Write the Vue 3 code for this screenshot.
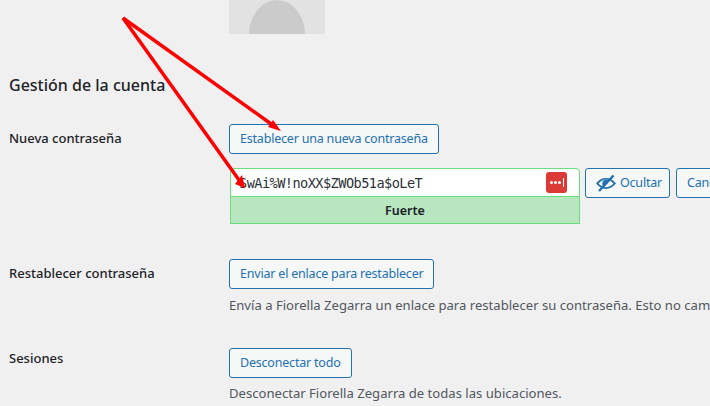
<script setup>
const password = 'SwAi%W!noXX$ZWOb51a$oLeT'
const holder = 'Fiorella Zegarra'
</script>

<template>
  <main class="page">
    <div class="avatar-row">
      <div class="avatar"><div class="avatar-head"></div></div>
    </div>

    <h2 class="title">Gestión de la cuenta</h2>

    <section class="row first">
      <div class="label">Nueva contraseña</div>
      <div class="field">
        <button class="btn">Establecer una nueva contraseña</button>
        <div class="pass-line">
          <div class="pass-box">
            <div class="pass-input">
              <span class="pass-text">{{ password }}</span>
              <span class="manager">
                <i></i><i></i><i></i><b></b>
              </span>
            </div>
            <div class="strength">Fuerte</div>
          </div>
          <button class="btn hide">
            <svg class="eye" width="20" height="20" viewBox="0 0 20 20">
              <path d="M0 10.500C3 6.800 6.300 5 10 5s7 1.800 10 5.500c-3 3.600-6.300 5.400-10 5.400s-7-1.800-10-5.400zm10-3.900c-2.500 0-5 1.300-7.500 3.900 2.500 2.500 5 3.800 7.500 3.800s5-1.300 7.500-3.800C15 7.900 12.500 6.600 10 6.600z" fill="#2271b1"/>
              <path d="M6.300 10.300A3.800 3.800 0 0 1 13.300 8.300L7.800 14.100a3.800 3.800 0 0 1-1.500-3.800z" fill="#2271b1"/>
              <path d="M3 18 17.500 2.500" stroke="#2271b1" stroke-width="2.400" fill="none"/>
            </svg>
            Ocultar
          </button>
          <button class="btn cancel">Cancelar</button>
        </div>
      </div>
    </section>

    <section class="row reset">
      <div class="label">Restablecer contraseña</div>
      <div class="field">
        <button class="btn">Enviar el enlace para restablecer</button>
        <p class="desc reset-desc">Envía a {{ holder }} un enlace para restablecer su contraseña. Esto no cambiará su contraseña ni la forzará a cambiarla.</p>
      </div>
    </section>

    <section class="row sessions">
      <div class="label sessions-label">Sesiones</div>
      <div class="field">
        <button class="btn">Desconectar todo</button>
        <p class="desc sessions-desc">Desconectar {{ holder }} de todas las ubicaciones.</p>
      </div>
    </section>

    <svg class="arrows" width="710" height="406" viewBox="0 0 710 406">
      <g stroke="#fe0000" stroke-width="3.500" fill="none">
        <path d="M123 18 274 126"/>
        <path d="M123 18 239 180"/>
      </g>
      <g fill="#fe0000">
        <path d="M281 131 268 127 273 120Z"/>
        <path d="M245 188 235 184 242 175Z"/>
      </g>
    </svg>
  </main>
</template>

<style>
html, body { margin: 0; background: #f0f0f1; }
</style>

<style scoped>
.page {
  position: relative;
  width: 710px;
  height: 406px;
  overflow: hidden;
  background: #f0f0f1;
  color: #1d2327;
  font-family: "Noto Sans", sans-serif;
  font-size: 13px;
}
.avatar-row { padding-left: 229px; }
.avatar {
  width: 96px;
  height: 34px;
  background: #e2e2e2;
  overflow: hidden;
  display: flex;
  justify-content: center;
}
.avatar-head {
  width: 56px;
  height: 70px;
  border-radius: 50%;
  background: #cbcbcb;
}
.title {
  margin: 40px 0 0 9px;
  font-size: 16px;
  line-height: 22px;
  font-weight: 500;
}
.row { display: flex; padding-left: 9px; }
.first { margin-top: 28px; }
.reset { margin-top: 35px; }
.sessions { margin-top: 34px; }
.label {
  width: 220px;
  flex: none;
  font-weight: 500;
  font-size: 13px;
  line-height: 18px;
  padding-top: 5px;
}
.sessions-label { padding-top: 1px; }
.field { flex: none; }
.btn {
  box-sizing: border-box;
  height: 30px;
  padding: 0 10px;
  border: 1px solid #2271b1;
  border-radius: 3px;
  background: #f6f7f7;
  color: #2271b1;
  font: 12.500px/28px "Noto Sans", sans-serif;
  letter-spacing: -0.200px;
  white-space: nowrap;
  display: inline-block;
  vertical-align: top;
}
.pass-line {
  display: flex;
  align-items: flex-start;
  margin-top: 14px;
  margin-left: 1px;
}
.pass-box { width: 350px; flex: none; }
.pass-input {
  box-sizing: border-box;
  height: 29px;
  border: 1px solid #68de7c;
  border-radius: 4px 4px 0 0;
  background: #fff;
  display: flex;
  align-items: center;
  justify-content: space-between;
  padding: 0 12px 0 8px;
}
.pass-text {
  font: 13.600px "DejaVu Sans Mono", monospace;
  letter-spacing: -0.550px;
  color: #2c3338;
}
.manager {
  width: 21px;
  height: 21px;
  background: #db3a36;
  border-radius: 3px;
  display: flex;
  align-items: center;
  justify-content: center;
  gap: 1px;
}
.manager i {
  width: 3px;
  height: 3px;
  background: #fff;
  border-radius: 50%;
}
.manager b {
  width: 1px;
  height: 9px;
  margin-left: 1px;
  background: #fff;
}
.strength {
  box-sizing: border-box;
  height: 27px;
  border: 1px solid #68de7c;
  border-top: 0;
  background: #b8e6bf;
  text-align: center;
  font-weight: 600;
  font-size: 12.500px;
  line-height: 27px;
}
.hide {
  margin-left: 5px;
  display: inline-flex;
  align-items: center;
  gap: 4px;
  padding: 0 7px 0 10px;
  flex: none;
}
.eye { flex: none; }
.cancel { margin-left: 6px; flex: none; }
.desc {
  margin: 8px 0 0;
  width: 640px;
  white-space: nowrap;
  color: #50575e;
  font-size: 13.100px;
  line-height: 18px;
}
.reset-desc { margin-top: 7px; }
.sessions-desc { margin-top: 6px; }
.arrows {
  position: absolute;
  left: 0;
  top: 0;
  pointer-events: none;
}
</style>
